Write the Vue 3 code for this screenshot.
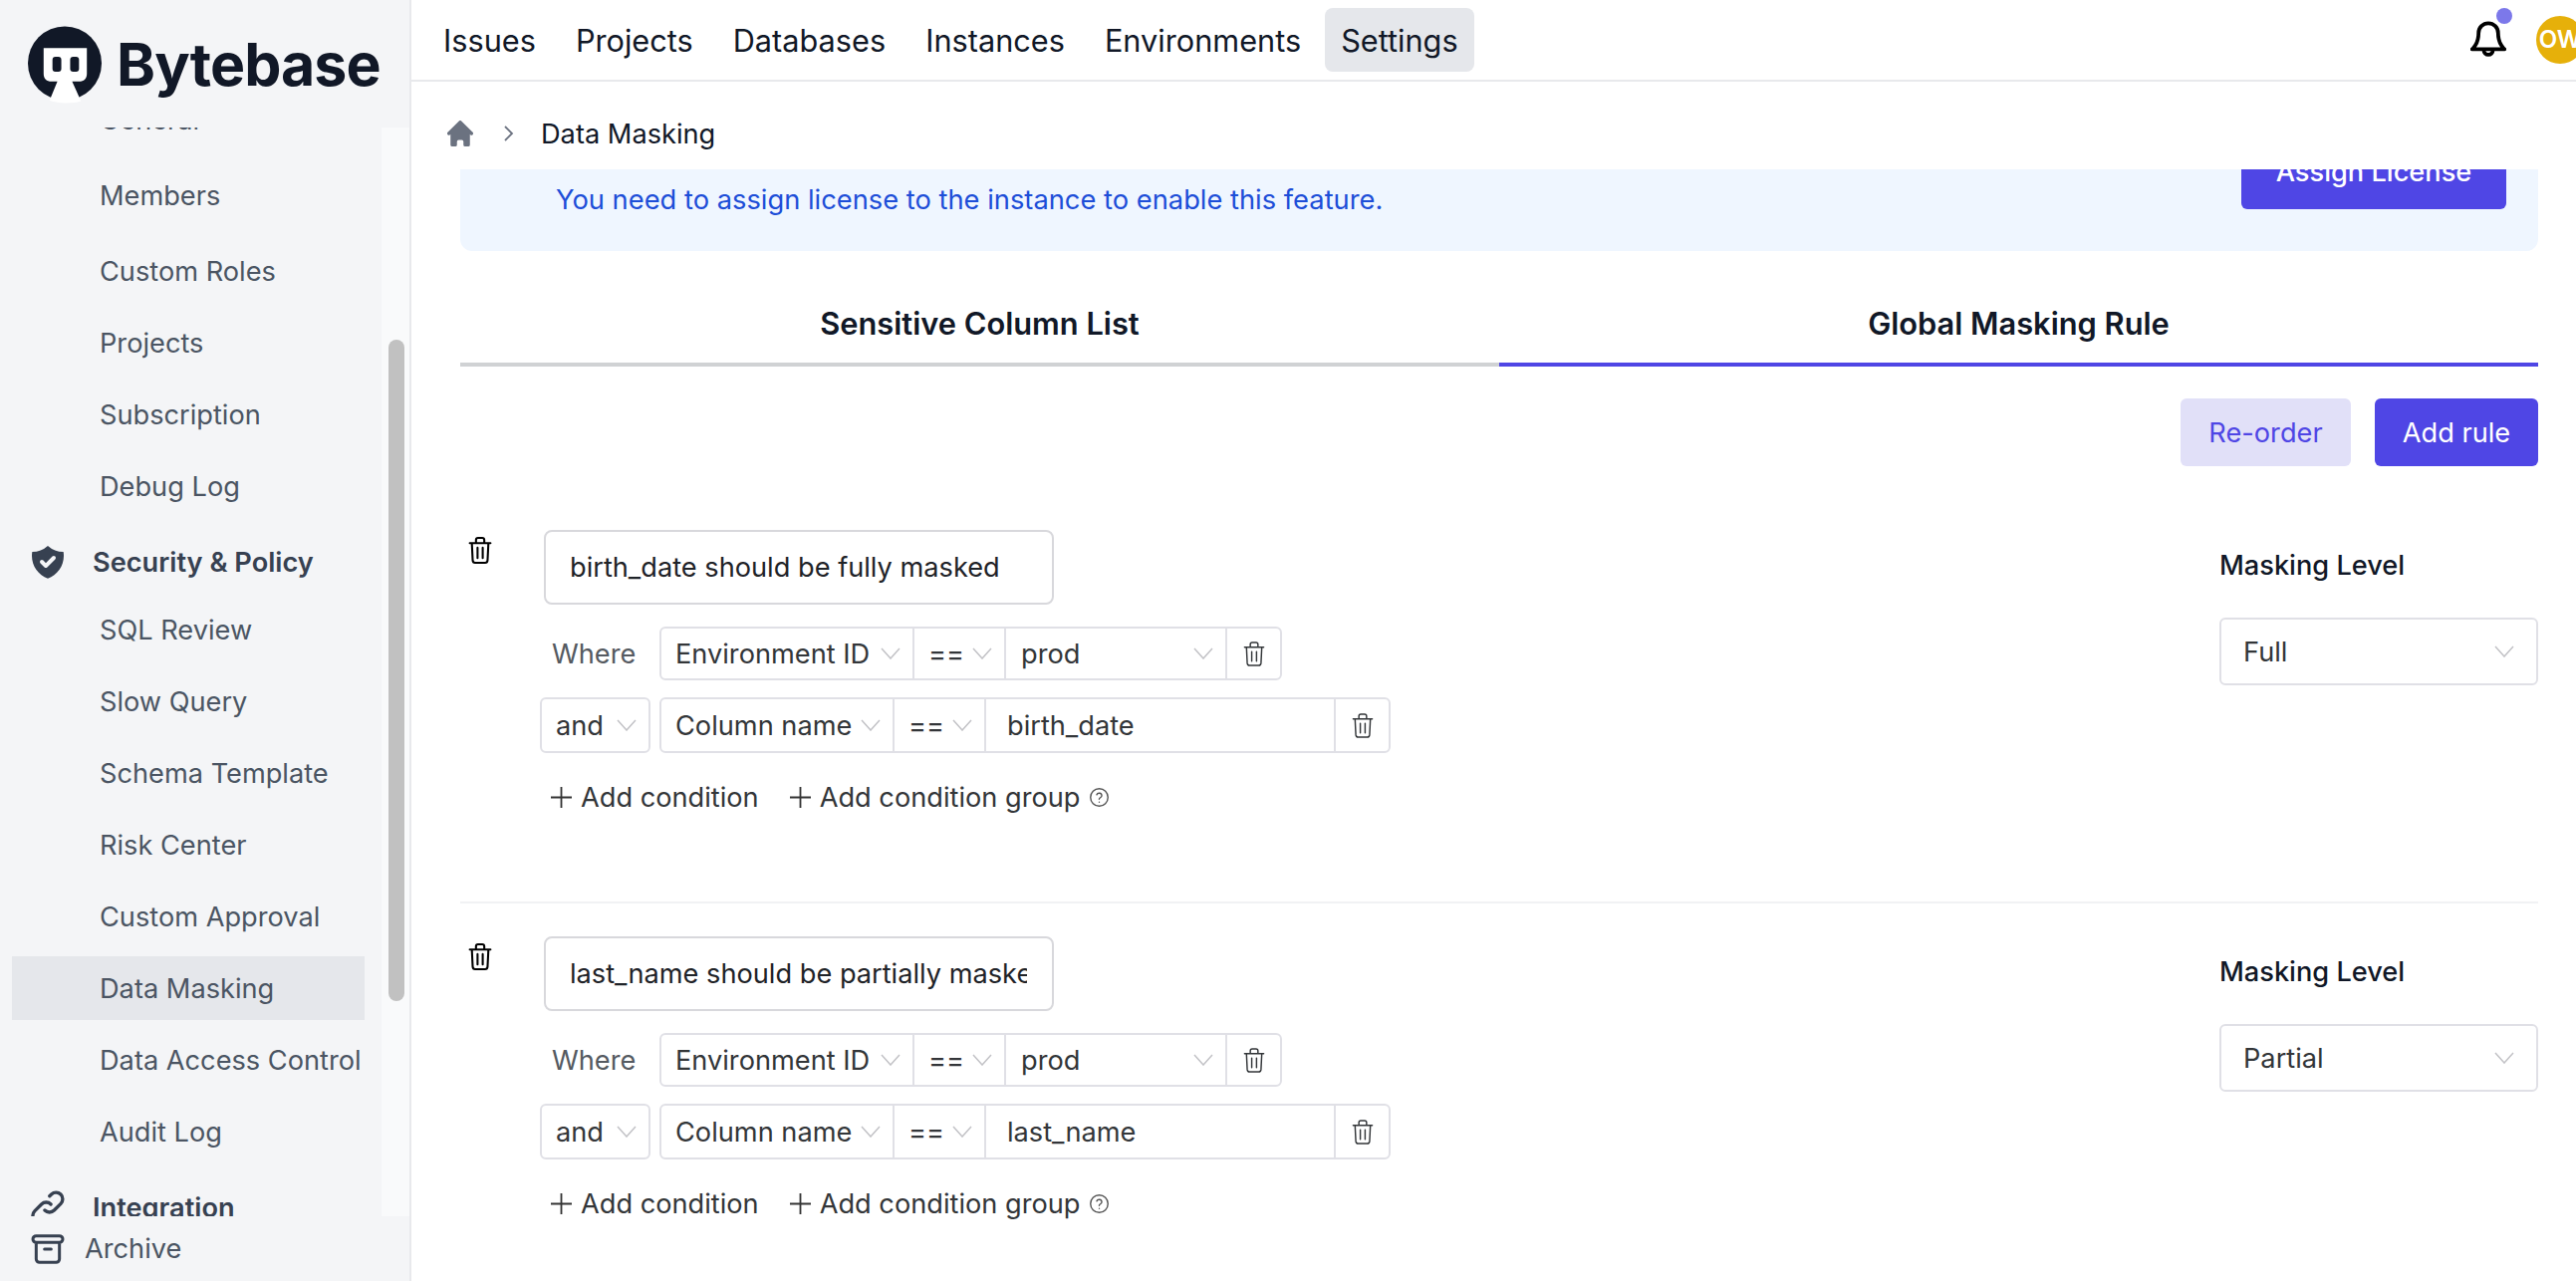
<script setup>
const topNav = ['Issues', 'Projects', 'Databases', 'Instances', 'Environments', 'Settings']
const side = [
  { label: 'General' },
  { label: 'Members', loose: true },
  { label: 'Custom Roles', loose: true },
  { label: 'Projects' },
  { label: 'Subscription' },
  { label: 'Debug Log' },
  { label: 'Security & Policy', head: 'shield' },
  { label: 'SQL Review' },
  { label: 'Slow Query' },
  { label: 'Schema Template' },
  { label: 'Risk Center' },
  { label: 'Custom Approval' },
  { label: 'Data Masking', active: true },
  { label: 'Data Access Control' },
  { label: 'Audit Log' },
  { label: 'Integration', head: 'link' },
]
const rules = [
  { name: 'birth_date should be fully masked', col: 'birth_date', level: 'Full' },
  { name: 'last_name should be partially masked', col: 'last_name', level: 'Partial' },
]
</script>

<template>
  <div class="app">
    <svg class="defs" aria-hidden="true">
      <symbol id="trash" viewBox="0 0 22 26">
        <path d="M1 6h20M3 6l.8 16.5c.1 1.4 1 2.5 2.4 2.5h9.6c1.4 0 2.3-1.1 2.4-2.5L19 6M7 6V3c0-1.1.9-2 2-2h4c1.100 0 2 .9 2 2v3M8.500 10.500v10M13.500 10.500v10" fill="none" stroke="currentColor" stroke-linecap="round" stroke-linejoin="round" />
      </symbol>
      <symbol id="chev" viewBox="0 0 20 12">
        <path d="M1 1l9 10 9-10" fill="none" stroke="currentColor" stroke-width="1.500" />
      </symbol>
    </svg>

    <aside class="sidebar">
      <div class="brand">
        <svg class="mark" viewBox="0 0 76 78" aria-hidden="true">
          <circle cx="37.500" cy="37.500" r="37.500" fill="#111827" />
          <path d="M16 22h44v26c0 5-3 8-8 8h-7l9 20c-4 1.500-10 2-16 2-5 0-11-1-16-2.500L30 56h-6c-5 0-8-3-8-8z" fill="#fff" />
          <rect x="25" y="31" width="9" height="15" rx="3" fill="#111827" />
          <rect x="43" y="31" width="9" height="15" rx="3" fill="#111827" />
        </svg>
        <span class="wordmark">Bytebase</span>
      </div>

      <div class="side-scroll">
        <nav class="side-list">
          <a
            v-for="it in side"
            :key="it.label"
            class="side-item"
            :class="{ loose: it.loose, active: it.active, head: it.head }"
          >
            <svg v-if="it.head === 'shield'" class="side-ico" viewBox="0 0 20 20" aria-hidden="true">
              <path fill="#374151" fill-rule="evenodd" d="M2.166 4.999A11.954 11.954 0 0010 1.944 11.954 11.954 0 0017.834 5c.11.65.166 1.32.166 2.001 0 5.225-3.34 9.67-8 11.317C5.34 16.67 2 12.225 2 7c0-.682.057-1.35.166-2.001zm11.541 3.708a1 1 0 00-1.414-1.414L9 10.586 7.707 9.293a1 1 0 00-1.414 1.414l2 2a1 1 0 001.414 0l4-4z" clip-rule="evenodd" />
            </svg>
            <svg v-if="it.head === 'link'" class="side-ico" viewBox="0 0 24 24" aria-hidden="true">
              <path fill="none" stroke="#374151" stroke-width="2" stroke-linecap="round" stroke-linejoin="round" d="M13.828 10.172a4 4 0 00-5.656 0l-4 4a4 4 0 105.656 5.656l1.102-1.101m-.758-4.899a4 4 0 005.656 0l4-4a4 4 0 00-5.656-5.656l-1.100 1.100" />
            </svg>
            <span>{{ it.label }}</span>
          </a>
        </nav>
        <div class="track"><div class="thumb"></div></div>
      </div>

      <div class="archive">
        <svg class="arch-ico" viewBox="0 0 24 24" aria-hidden="true">
          <path fill="none" stroke="#374151" stroke-width="1.800" stroke-linecap="round" stroke-linejoin="round" d="M5 8h14M5 8a2 2 0 110-4h14a2 2 0 110 4M5 8v10a2 2 0 002 2h10a2 2 0 002-2V8m-9 4h4" />
        </svg>
        <span>Archive</span>
      </div>
    </aside>

    <main class="main">
      <header class="topbar">
        <nav class="top-nav">
          <a v-for="n in topNav" :key="n" class="top-link" :class="{ on: n === 'Settings' }">{{ n }}</a>
        </nav>
        <div class="top-right">
          <div class="bell">
            <svg viewBox="1 1 22 24.400" aria-hidden="true">
              <path d="M6 9a6 6 0 0 1 12 0c0 7 4 10 4 10H2s4-3 4-10M9.200 19.500a2.800 2.800 0 0 0 5.600 0" fill="none" stroke="#000" stroke-width="2.300" stroke-linecap="round" stroke-linejoin="round" />
            </svg>
            <i class="dot"></i>
          </div>
          <div class="avatar">OW</div>
        </div>
      </header>

      <div class="crumbs">
        <svg class="home" viewBox="2 2 16 16" aria-hidden="true">
          <path fill="#6b7280" d="M10.707 2.293a1 1 0 00-1.414 0l-7 7a1 1 0 001.414 1.414L4 10.414V17a1 1 0 001 1h2a1 1 0 001-1v-2a1 1 0 011-1h2a1 1 0 011 1v2a1 1 0 001 1h2a1 1 0 001-1v-6.586l.293.293a1 1 0 001.414-1.414l-7-7z" />
        </svg>
        <svg class="crumb-chev" viewBox="0 0 11 16" aria-hidden="true">
          <path d="M2 1l7 7-7 7" fill="none" stroke="#6b7280" stroke-width="1.800" />
        </svg>
        <span class="crumb-text">Data Masking</span>
      </div>

      <section class="content">
        <div class="banner">
          <p class="banner-text">You need to assign license to the instance to enable this feature.</p>
          <button class="btn primary license">Assign License</button>
        </div>

        <div class="tabs">
          <div class="tab">Sensitive Column List</div>
          <div class="tab sel">Global Masking Rule</div>
        </div>

        <div class="actions">
          <button class="btn soft">Re-order</button>
          <button class="btn primary">Add rule</button>
        </div>

        <div class="rules">
          <article v-for="r in rules" :key="r.col" class="rule">
            <div class="del-col">
              <svg class="del-big"><use href="#trash" /></svg>
            </div>
            <div class="rule-body">
              <div class="name-input"><span class="name-clip">{{ r.name }}</span></div>

              <div class="cond first">
                <div class="cond-left"><span class="where">Where</span></div>
                <div class="group">
                  <div class="cell w-env"><span>Environment ID</span><svg class="chev"><use href="#chev" /></svg></div>
                  <div class="cell w-op"><span class="op">==</span><svg class="chev"><use href="#chev" /></svg></div>
                  <div class="cell w-val"><span>prod</span><svg class="chev"><use href="#chev" /></svg></div>
                  <div class="cell w-del"><svg class="del-sm"><use href="#trash" /></svg></div>
                </div>
              </div>

              <div class="cond second">
                <div class="cond-left">
                  <div class="and-box"><span>and</span><svg class="chev"><use href="#chev" /></svg></div>
                </div>
                <div class="group">
                  <div class="cell w-col"><span>Column name</span><svg class="chev"><use href="#chev" /></svg></div>
                  <div class="cell w-op"><span class="op">==</span><svg class="chev"><use href="#chev" /></svg></div>
                  <div class="cell w-text"><span>{{ r.col }}</span></div>
                  <div class="cell w-del"><svg class="del-sm"><use href="#trash" /></svg></div>
                </div>
              </div>

              <div class="adds">
                <a class="add">
                  <svg class="plus" viewBox="0 0 21 21" aria-hidden="true"><path d="M10.500 0v21M0 10.500h21" stroke="#333" stroke-width="1.800" /></svg>
                  Add condition
                </a>
                <a class="add">
                  <svg class="plus" viewBox="0 0 21 21" aria-hidden="true"><path d="M10.500 0v21M0 10.500h21" stroke="#333" stroke-width="1.800" /></svg>
                  Add condition group
                </a>
                <svg class="help" viewBox="0 0 24 24" aria-hidden="true">
                  <circle cx="12" cy="12" r="10" fill="none" stroke="#555" stroke-width="1.600" />
                  <path d="M9.100 9a3 3 0 0 1 5.800 1c0 2-3 2.500-3 4M12 17.500h.01" fill="none" stroke="#555" stroke-width="1.600" stroke-linecap="round" />
                </svg>
              </div>
            </div>
            <div class="level">
              <div class="level-label">Masking Level</div>
              <div class="level-select"><span>{{ r.level }}</span><svg class="chev"><use href="#chev" /></svg></div>
            </div>
          </article>
        </div>
      </section>
    </main>
  </div>
</template>

<style>
html, body { margin: 0; background: #fff; overflow: hidden; }
</style>

<style scoped>
.app {
  display: flex;
  width: 2586px;
  height: 1286px;
  overflow: hidden;
  font-family: Inter, "Liberation Sans", sans-serif;
  font-size: 27.200px;
  color: #1f2328;
  background: #fff;
}
.defs { position: absolute; width: 0; height: 0; }

.sidebar {
  flex: 0 0 413px;
  box-sizing: border-box;
  height: 1286px;
  display: flex;
  flex-direction: column;
  background: #f4f5f7;
  border-right: 2px solid #e8e9ec;
}
.brand {
  flex: 0 0 128px;
  box-sizing: border-box;
  display: flex;
  align-items: flex-start;
  padding: 26px 0 0 28px;
  gap: 14px;
}
.mark { width: 75px; height: 78px; flex: none; }
.wordmark {
  margin-top: 3px;
  font-size: 59px;
  line-height: 72px;
  font-weight: 700;
  letter-spacing: -0.900px;
  color: #111827;
}
.side-scroll {
  position: relative;
  flex: 0 0 1093px;
  overflow: hidden;
}
.side-list {
  display: flex;
  flex-direction: column;
  margin-top: -40px;
  padding-left: 12px;
  width: 354px;
}
.side-item {
  display: flex;
  align-items: center;
  flex: none;
  height: 64px;
  margin-bottom: 8px;
  padding-left: 88px;
  color: #4b5563;
  white-space: nowrap;
}
.side-item.loose { margin-top: 4px; }
.side-item.active { background: #e5e7eb; }
.side-item.head {
  height: 72px;
  margin-bottom: 0;
  padding-left: 16px;
  color: #374151;
  font-weight: 600;
}
.side-item.head span { margin-left: 25px; }
.side-ico { width: 40px; height: 40px; flex: none; }
.track {
  position: absolute;
  top: 0;
  right: 0;
  bottom: 0;
  width: 28px;
  background: #f9fafb;
}
.thumb {
  position: absolute;
  top: 213px;
  left: 7px;
  width: 16px;
  height: 664px;
  border-radius: 8px;
  background: #c1c1c1;
}
.archive {
  flex: 1;
  display: flex;
  align-items: center;
  gap: 17px;
  padding-left: 28px;
  color: #4b5563;
}
.arch-ico { width: 40px; height: 40px; flex: none; }

.main {
  flex: 1;
  min-width: 0;
  display: flex;
  flex-direction: column;
}
.topbar {
  flex: 0 0 82px;
  box-sizing: border-box;
  display: flex;
  align-items: flex-start;
  justify-content: space-between;
  border-bottom: 2px solid #e8e9ec;
}
.top-nav {
  display: flex;
  gap: 8px;
  margin-top: 8px;
  padding-left: 16px;
}
.top-link {
  display: flex;
  align-items: center;
  height: 64px;
  padding: 0 16px;
  border-radius: 8px;
  font-size: 30.700px;
  color: #111827;
}
.top-link.on { background: #e5e7eb; }
.top-right {
  display: flex;
  align-items: flex-start;
  gap: 30px;
  margin-right: -8px;
}
.bell { position: relative; width: 36px; height: 40px; margin-top: 20px; }
.bell svg { width: 36px; height: 40px; display: block; }
.dot {
  position: absolute;
  top: -12px;
  left: 26px;
  width: 16px;
  height: 16px;
  border-radius: 50%;
  background: #7c78ea;
}
.avatar {
  width: 48px;
  height: 48px;
  margin-top: 16px;
  border-radius: 50%;
  background: #e6b00a;
  color: #fff;
  font-size: 24px;
  font-weight: 600;
  line-height: 48px;
  text-align: center;
  white-space: nowrap;
}

.crumbs {
  flex: 0 0 88px;
  box-sizing: border-box;
  display: flex;
  align-items: center;
  padding: 16px 0 0 36px;
}
.home { width: 26px; height: 26px; flex: none; }
.crumb-chev { width: 11px; height: 16px; margin-left: 30px; flex: none; }
.crumb-text { margin-left: 27px; color: #111827; }

.content {
  flex: 1;
  min-height: 0;
  overflow: hidden;
  padding: 0 38px 0 49px;
}
.banner {
  box-sizing: border-box;
  height: 146px;
  margin-top: -64px;
  display: flex;
  align-items: flex-end;
  justify-content: space-between;
  padding: 0 32px 0 96px;
  background: #eff6ff;
  border-radius: 12px;
}
.banner-text {
  margin: 0 0 31px;
  line-height: 40px;
  font-size: 27.300px;
  color: #1d4ed8;
}
.btn {
  box-sizing: border-box;
  height: 68px;
  border: 0;
  border-radius: 6px;
  font: inherit;
  cursor: pointer;
}
.primary { background: #4f46e5; color: #fff; }
.soft { background: #e1e0f8; color: #4f46e5; width: 171px; }
.license {
  width: 266px;
  margin-bottom: 42px;
  padding-bottom: 8px;
  font-weight: 500;
}

.tabs { display: flex; }
.tab {
  flex: 1;
  box-sizing: border-box;
  height: 116px;
  padding-top: 53px;
  line-height: 40px;
  text-align: center;
  font-size: 30.800px;
  font-weight: 600;
  color: #111827;
  border-bottom: 4px solid #d0d2d4;
}
.tab.sel { border-bottom-color: #4f46e5; }

.actions {
  display: flex;
  justify-content: flex-end;
  gap: 24px;
  margin-top: 32px;
}
.actions .primary { width: 164px; }

.rules { margin-top: 31px; }
.rule {
  display: flex;
  box-sizing: border-box;
  padding: 33px 0 85px;
  border-bottom: 2px solid #f1f2f4;
}
.del-col { flex: 0 0 80px; box-sizing: border-box; padding: 7px 0 0 8px; }
.del-big { display: block; width: 24px; height: 27px; color: #000; stroke-width: 2px; }
.rule-body { flex: 1; min-width: 0; }
.name-input {
  box-sizing: border-box;
  width: 512px;
  height: 75px;
  margin-left: 4px;
  padding: 1px 25px 0 24px;
  display: flex;
  align-items: center;
  background: #fff;
  border: 2px solid #d8d8dc;
  border-radius: 8px;
  color: #1f2328;
}
.name-clip { display: block; overflow: hidden; white-space: nowrap; line-height: 40px; }
.cond { display: flex; height: 54px; }
.cond.first { margin-top: 22px; }
.cond.second { margin-top: 17px; height: 56px; }
.cond-left { flex: 0 0 120px; display: flex; align-items: center; }
.where { padding-left: 12px; color: #555a61; }
.and-box, .group, .level-select {
  box-sizing: border-box;
  background: #fff;
  border: 2px solid #e0e0e6;
  border-radius: 6px;
  color: #333639;
}
.and-box {
  width: 111px;
  height: 100%;
  display: flex;
  align-items: center;
  justify-content: space-between;
  padding: 0 12px 0 14px;
}
.group { display: flex; height: 100%; }
.cell {
  box-sizing: border-box;
  display: flex;
  align-items: center;
  justify-content: space-between;
  padding: 0 12px 0 14px;
  border-right: 2px solid #e0e0e6;
  white-space: nowrap;
}
.cell:last-child { border-right: 0; }
.w-env { width: 254px; }
.w-col { width: 234px; }
.w-op { width: 92px; }
.w-val { width: 222px; padding-left: 15px; }
.w-text { width: 351px; padding-left: 21px; }
.w-del { width: 53px; justify-content: center; padding: 0; }
.chev { width: 20px; height: 12px; flex: none; color: #c2c2c6; }
.del-sm { width: 22px; height: 25px; color: #333639; stroke-width: 1.500px; }
.adds {
  display: flex;
  align-items: center;
  height: 40px;
  margin-top: 24px;
  padding-left: 11px;
  color: #333639;
}
.add { display: flex; align-items: center; gap: 9px; margin-right: 31px; white-space: nowrap; }
.add + .add { margin-right: 9px; }
.plus { width: 21px; height: 21px; flex: none; }
.help { width: 21px; height: 21px; flex: none; }
.level { flex: 0 0 320px; padding-top: 16px; }
.level-label { line-height: 40px; font-weight: 500; color: #111827; }
.level-select {
  height: 68px;
  margin-top: 32px;
  padding: 0 22px;
  display: flex;
  align-items: center;
  justify-content: space-between;
}
</style>
